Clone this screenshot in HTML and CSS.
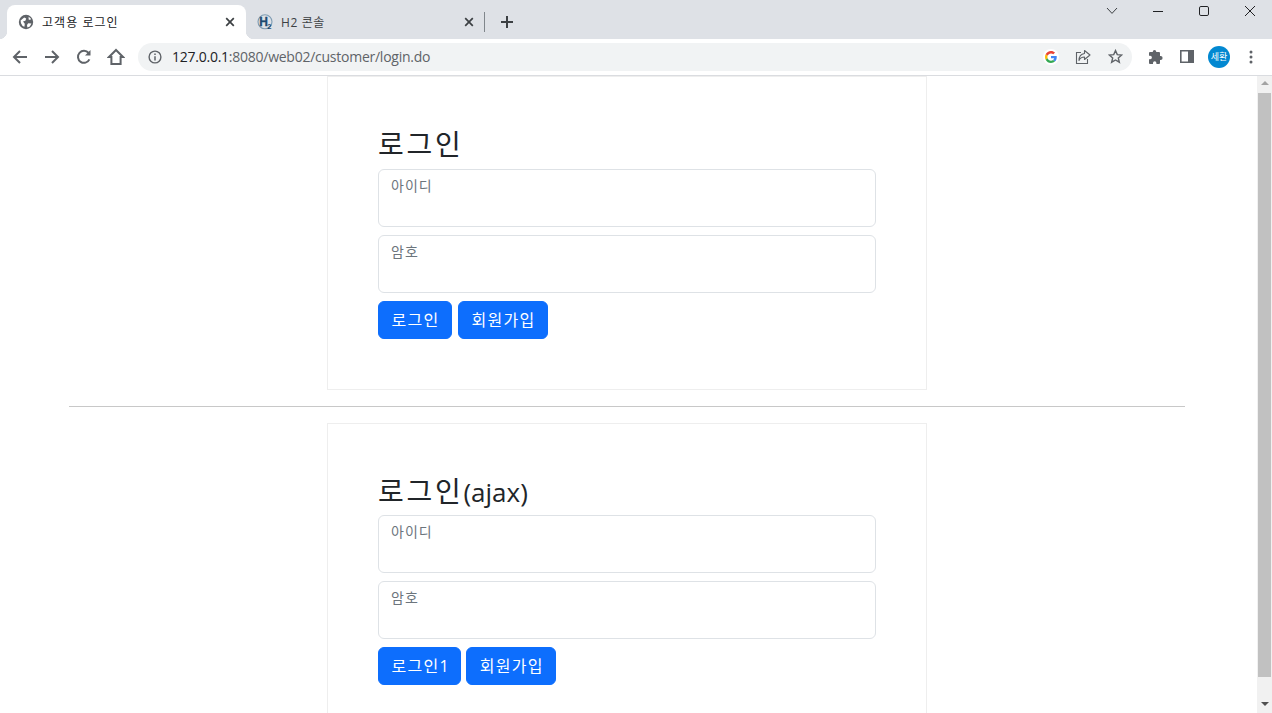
FILE: index.html
```html
<!DOCTYPE html>
<html lang="ko">
<head>
<meta charset="utf-8">
<title>고객용 로그인</title>
<link rel="stylesheet" href="styles.css">
</head>
<body>
<div class="window">
  <header class="tabstrip">
    <div class="tab tab-active">
      <svg class="favicon" viewBox="0 0 16 16"><circle cx="8" cy="8" r="7.2" fill="#5f6368"/><path d="M2.6 6.400 6.200 3.400 8.200 4.400 7.400 6.800 5 7.400 6.800 9.800 6.400 12.800 4.600 12 3 9.200z" fill="#fff"/><path d="M10.200 9.200 13.400 9.400 11.800 12.400 9.400 13.400 9 11z" fill="#fff"/><path d="M10.600 2.800 12.800 4.400 12.400 6 10.600 5.400z" fill="#fff"/></svg>
      <span class="tab-title">고객용 로그인</span>
      <svg class="tab-close" viewBox="0 0 10 10"><path d="M1.200 1.200l7.600 7.600M8.800 1.200 1.200 8.800" stroke="#3c4043" stroke-width="1.700" fill="none"/></svg>
    </div>
    <div class="tab tab-idle">
      <svg class="favicon favicon-h2" viewBox="0 0 16 16"><circle cx="8" cy="7.800" r="7" fill="none" stroke="#7e9cb3" stroke-width="1.100"/><text x="2.200" y="12" class="h2-h">H</text><text x="10.200" y="15.400" class="h2-2">2</text></svg>
      <span class="tab-title tab-title-h2">H2 콘솔</span>
      <svg class="tab-close" viewBox="0 0 10 10"><path d="M1.200 1.200l7.600 7.600M8.800 1.200 1.200 8.800" stroke="#3c4043" stroke-width="1.700" fill="none"/></svg>
    </div>
    <svg class="newtab" viewBox="0 0 14 14"><path d="M7 1v12M1 7h12" stroke="#3c4043" stroke-width="2" fill="none"/></svg>
    <div class="strip-fill"></div>
    <div class="winbtn"><svg width="12" height="8" viewBox="0 0 12 8"><path d="M1 1l5 5.400L11 1" stroke="#3c4043" fill="none"/></svg></div>
    <div class="winbtn"><svg width="12" height="12" viewBox="0 0 12 12"><path d="M1 6.500h10" stroke="#202124" fill="none"/></svg></div>
    <div class="winbtn"><svg width="12" height="12" viewBox="0 0 12 12"><rect x="1.500" y="1.500" width="9" height="9" rx="1.400" stroke="#202124" fill="none"/></svg></div>
    <div class="winbtn"><svg width="12" height="12" viewBox="0 0 12 12"><path d="M1 1l10 10M11 1 1 11" stroke="#202124" fill="none"/></svg></div>
  </header>
  <nav class="toolbar">
    <div class="navbtn"><svg width="18" height="18" viewBox="0 0 18 18"><path d="M16 9H3M9 3 3 9l6 6" stroke="#5f6368" stroke-width="2" fill="none"/></svg></div>
    <div class="navbtn"><svg width="18" height="18" viewBox="0 0 18 18"><path d="M2 9h13M9 3l6 6-6 6" stroke="#5f6368" stroke-width="2" fill="none"/></svg></div>
    <div class="navbtn"><svg width="18" height="18" viewBox="0 0 18 18"><path d="M14.400 11.400A6 6 0 1 1 13.600 5" stroke="#5f6368" stroke-width="2" fill="none"/><path d="M15.500 2v5.500H10z" fill="#5f6368"/></svg></div>
    <div class="navbtn"><svg width="18" height="18" viewBox="0 0 18 18"><path d="M9 2 2 9h2.400v7h9.200V9H16z" stroke="#5f6368" stroke-width="2" fill="none"/></svg></div>
    <div class="omnibox">
      <svg class="omni-info" width="14" height="14" viewBox="0 0 14 14"><circle cx="7" cy="7" r="5.900" stroke="#5f6368" stroke-width="1.400" fill="none"/><path d="M7 6.200v4.200M7 3.600v1.500" stroke="#5f6368" stroke-width="1.500" fill="none"/></svg>
      <div class="url"><span class="url-host">127.0.0.1</span>:8080/web02/customer/login.do</div>
      <div class="navbtn"><span class="g-badge"><svg width="12" height="12" viewBox="0 0 48 48"><path fill="#EA4335" d="M24 9.500c3.500 0 6.700 1.200 9.200 3.600l6.900-6.900C35.900 2.400 30.500 0 24 0 14.600 0 6.500 5.400 2.600 13.200l8 6.200C12.400 13.700 17.700 9.500 24 9.500z"/><path fill="#4285F4" d="M47 24.500c0-1.600-.1-3.100-.4-4.500H24v9h12.900c-.6 3-2.200 5.500-4.700 7.200l7.700 6C44.400 37.500 47 31.600 47 24.500z"/><path fill="#FBBC05" d="M10.500 28.600c-.5-1.400-.8-3-.8-4.600s.3-3.200.8-4.600l-8-6.200C.9 16.500 0 20.100 0 24s.9 7.500 2.600 10.800z"/><path fill="#34A853" d="M24 48c6.500 0 11.900-2.100 15.900-5.800l-7.700-6c-2.200 1.400-4.900 2.300-8.200 2.300-6.300 0-11.600-4.200-13.500-9.900l-8 6.200C6.500 42.600 14.600 48 24 48z"/></svg></span></div>
      <div class="navbtn"><svg width="16" height="16" viewBox="0 0 16 16"><path d="M6 3.500H1.500v11h11V10" stroke="#5f6368" stroke-width="1.100" fill="none"/><path d="M9.500 1.500 15 6l-5.500 4.500V8C7 8 5 9 4 11.500 4 8 6 5 9.500 4.500z" stroke="#5f6368" stroke-width="1.100" fill="none" stroke-linejoin="round"/></svg></div>
      <div class="navbtn"><svg width="15" height="15" viewBox="0 0 16 16"><path d="M8 1.700l1.900 4.300 4.700.4-3.600 3.100 1.100 4.600L8 11.700l-4.100 2.400L5 9.500 1.400 6.400l4.700-.4z" stroke="#5f6368" stroke-width="1.500" fill="none"/></svg></div>
    </div>
    <div class="tools">
      <div class="navbtn"><svg width="16" height="16" viewBox="0 0 16 16"><path d="M5.800 3H3a1 1 0 0 0-1 1v2.800h1.200a1.700 1.700 0 0 1 0 3.400H2V14a1 1 0 0 0 1 1h3v-1a1.700 1.700 0 0 1 3.400 0v1H12a1 1 0 0 0 1-1v-3h.6a2 2 0 0 0 0-4H13V4a1 1 0 0 0-1-1H9.200v-.4a1.700 1.700 0 0 0-3.400 0z" fill="#5f6368"/></svg></div>
      <div class="navbtn"><svg width="14" height="13" viewBox="0 0 14 13"><path fill-rule="evenodd" d="M0 0h14v13H0zM1.600 1.600v9.800H8V1.600z" fill="#5f6368"/></svg></div>
      <div class="navbtn"><span class="avatar">세환</span></div>
      <div class="navbtn"><svg width="4" height="14" viewBox="0 0 4 14"><circle cx="2" cy="2" r="1.500" fill="#5f6368"/><circle cx="2" cy="7" r="1.500" fill="#5f6368"/><circle cx="2" cy="12" r="1.500" fill="#5f6368"/></svg></div>
    </div>
  </nav>
  <div class="viewport">
    <main class="page">
      <section class="card">
        <h3 class="heading">로그인</h3>
        <form class="login-form">
          <textarea class="field" placeholder="아이디"></textarea>
          <textarea class="field" placeholder="암호"></textarea>
          <div class="actions">
            <button type="button" class="btn">로그인</button>
            <button type="button" class="btn">회원가입</button>
          </div>
        </form>
      </section>
      <hr class="divider">
      <section class="card">
        <h3 class="heading">로그인<span class="latin">(ajax)</span></h3>
        <form class="login-form">
          <textarea class="field" placeholder="아이디"></textarea>
          <textarea class="field" placeholder="암호"></textarea>
          <div class="actions">
            <button type="button" class="btn btn-narrow">로그인<span class="digit">1</span></button>
            <button type="button" class="btn">회원가입</button>
          </div>
        </form>
      </section>
    </main>
    <aside class="scrollbar">
      <div class="arrow arrow-up"></div>
      <div class="thumb"></div>
      <div class="arrow arrow-down"></div>
    </aside>
  </div>
</div>
</body>
</html>
```
FILE: styles.css
```css
* { box-sizing: border-box; }
html, body { margin: 0; height: 100%; overflow: hidden; }
body { font-family: "Open Sans", "Noto Sans CJK KR", sans-serif; background: #fff; color: #212529; }
.window { height: 713px; display: flex; flex-direction: column; }

/* tab strip */
.tabstrip { height: 39px; flex: none; background: #dee1e6; display: flex; align-items: flex-end; padding-left: 7px; }
.tab { width: 239px; height: 34px; display: flex; align-items: center; padding: 0 11px; position: relative; flex: none; }
.tab-active { background: #fff; border-radius: 8px 8px 0 0; }
.tab-active::before, .tab-active::after { content: ""; position: absolute; bottom: 0; width: 8px; height: 8px; }
.tab-active::before { left: -8px; background: radial-gradient(circle at 0 0, transparent 8px, #fff 8.5px); }
.tab-active::after { right: -8px; background: radial-gradient(circle at 100% 0, transparent 8px, #fff 8.5px); }
.tab-idle::after { content: ""; position: absolute; right: 0; top: 7px; width: 1px; height: 20px; background: #80868b; }
.favicon { width: 16px; height: 16px; flex: none; }
.favicon-h2 { overflow: visible; }
.tab-title { margin-left: 8px; flex: 1; font-size: 12px; color: #3c4043; letter-spacing: 1.05px; white-space: nowrap; }
.tab-title-h2 { letter-spacing: 0.6px; }
.tab-active .tab-title { color: #202124; }
.tab-close { width: 10px; height: 10px; flex: none; }
.h2-h { font: 700 12px "Liberation Sans", sans-serif; fill: #1c4a70; stroke: #1c4a70; stroke-width: 0.3px; }
.h2-2 { font: 700 7.5px "Liberation Sans", sans-serif; fill: #1c4a70; }
.newtab { width: 14px; height: 14px; margin: 0 0 10px 15px; flex: none; }
.strip-fill { flex: 1; }
.winbtn { width: 46px; height: 22px; align-self: flex-start; display: flex; align-items: center; justify-content: center; flex: none; }
.winbtn:last-child { width: 45px; }

/* toolbar */
.toolbar { height: 37px; flex: none; background: #fff; border-bottom: 1px solid #dadce0; display: flex; align-items: center; padding: 0 5px 1px 4px; }
.navbtn { width: 32px; height: 28px; flex: none; display: flex; align-items: center; justify-content: center; }
.omnibox { width: 994px; height: 28px; margin-left: 6px; background: #f1f3f4; border-radius: 14px; display: flex; align-items: center; padding: 0 1px 0 10px; flex: none; }
.omni-info { flex: none; }
.url { flex: 1; margin-left: 10px; font-size: 14px; letter-spacing: -0.25px; color: #5f6368; white-space: nowrap; }
.url-host { color: #202124; }
.g-badge { width: 16px; height: 16px; border-radius: 50%; background: #fff; display: flex; align-items: center; justify-content: center; }
.tools { display: flex; margin-left: 7px; }
.avatar { width: 22px; height: 22px; border-radius: 50%; background: #0288d1; color: #fff; font-size: 9px; display: flex; align-items: center; justify-content: center; }

/* page */
.viewport { flex: 1; min-height: 0; display: flex; }
.page { flex: 1; min-width: 0; overflow: hidden; padding: 0 72px 0 69px; }
.card { width: 600px; margin: 0 auto; border: 1px solid #eeeeee; padding: 50px; }
.heading { margin: 0 0 8px; padding-top: 1px; height: 33.6px; font-size: 28px; font-weight: 400; line-height: 33.6px; letter-spacing: 2.7px; white-space: nowrap; }
.latin { letter-spacing: 0; font-size: 26px; line-height: 1; }
.login-form { display: flex; flex-direction: column; gap: 8px; }
.field { display: block; width: 100%; height: 58px; resize: none; border: 1px solid #dee2e6; border-radius: 6px; padding: 5px 12px; font: 14px/21px "Open Sans", "Noto Sans CJK KR", sans-serif; letter-spacing: 1px; outline: none; background: #fff; }
.field::placeholder { color: #6c757d; opacity: 1; }
.actions { display: flex; gap: 6px; }
.btn { height: 38px; border: 1px solid #0d6efd; border-radius: 6px; background: #0d6efd; color: #fff; padding: 0 11.5px 0 12.5px; font: 16px/24px "Open Sans", "Noto Sans CJK KR", sans-serif; letter-spacing: 1.28px; white-space: nowrap; }
.btn-narrow { padding-right: 11px; margin-right: -0.5px; }
.digit { letter-spacing: 0; }
.divider { border: 0; border-top: 1px solid #c8c8c8; margin: 16px 0; height: 0; opacity: 1; }

/* scrollbar */
.scrollbar { width: 15px; flex: none; background: #f1f1f1; display: flex; flex-direction: column; align-items: center; padding-top: 5px; }
.arrow { width: 0; height: 0; border-left: 4px solid transparent; border-right: 4px solid transparent; flex: none; }
.arrow-up { border-bottom: 4px solid #a3a3a3; }
.arrow-down { border-top: 4px solid #505050; margin-top: 25px; }
.thumb { width: 13px; height: 584px; margin-top: 8px; background: #c1c1c1; flex: none; }
```
